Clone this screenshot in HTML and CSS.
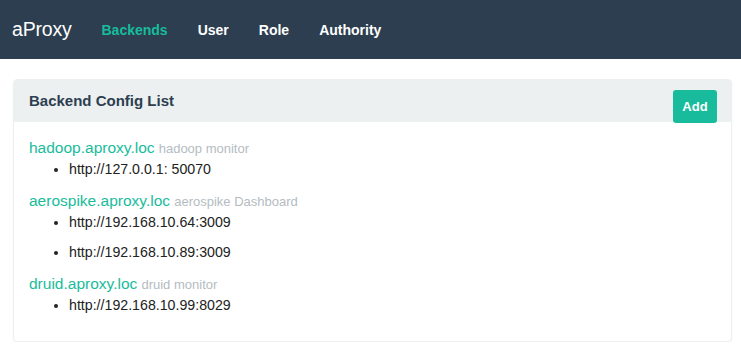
FILE: index.html
```html
<!DOCTYPE html>
<html lang="en">
<head>
    <meta charset="UTF-8">
    <meta name="viewport" content="width=device-width, initial-scale=1.0">
    <title>aProxy - Backends</title>
    <link rel="stylesheet" href="styles.css">
</head>
<body>
    <nav class="navbar">
        <a class="brand" href="#">aProxy</a>
        <a class="nav-link active" href="#">Backends</a>
        <a class="nav-link" href="#">User</a>
        <a class="nav-link" href="#">Role</a>
        <a class="nav-link" href="#">Authority</a>
    </nav>

    <div class="container">
        <div class="panel">
            <div class="panel-heading">
                <h3>Backend Config List</h3>
                <button class="btn-add">Add</button>
            </div>
            <div class="panel-body">
                <div class="backend">
                    <a href="#">hadoop.aproxy.loc</a> <small>hadoop monitor</small>
                    <ul><li>http://127.0.0.1: 50070</li></ul>
                </div>
                <div class="backend">
                    <a href="#">aerospike.aproxy.loc</a> <small>aerospike Dashboard</small>
                    <ul><li>http://192.168.10.64:3009</li></ul>
                    <ul><li>http://192.168.10.89:3009</li></ul>
                </div>
                <div class="backend">
                    <a href="#">druid.aproxy.loc</a> <small>druid monitor</small>
                    <ul><li>http://192.168.10.99:8029</li></ul>
                </div>
            </div>
        </div>
    </div>
</body>
</html>
```

FILE: styles.css
```css
body {
    margin: 0;
    font-family: 'Liberation Sans', Arial, sans-serif;
    font-size: 15px;
    color: #2c3e50;
    background: #fff;
}
.navbar {
    background: #2c3e50;
    height: 59px;
    display: flex;
    align-items: center;
    padding: 0 12px;
}
.navbar a {
    text-decoration: none;
    color: #fff;
}
.brand {
    font-size: 19.5px;
    margin-right: 30px;
    letter-spacing: -0.2px;
}
.nav-link {
    font-weight: bold;
    font-size: 14px;
    margin-right: 30px;
}
.nav-link.active {
    color: #18bc9c !important;
}
.container {
    padding: 20px 9px 0 13px;
}
.panel {
    border: 1px solid #ecf0f1;
    border-radius: 4px;
    box-shadow: 0 1px 2px rgba(0, 0, 0, 0.06);
}
.panel-heading {
    background: #ecf0f1;
    height: 42px;
    padding: 0 14px 0 15px;
    display: flex;
    justify-content: space-between;
    align-items: flex-start;
}
.panel-heading h3 {
    margin: 0;
    font-size: 15px;
    line-height: 42px;
}
.btn-add {
    margin-top: 10px;
    width: 44px;
    height: 33px;
    border: none;
    border-radius: 3px;
    background: #18bc9c;
    color: #fff;
    font-family: 'Liberation Sans', Arial, sans-serif;
    font-weight: bold;
    font-size: 13px;
    padding: 0;
    position: relative;
    z-index: 1;
}
.panel-body {
    padding: 16px 15px 14px;
    line-height: 20px;
}
.backend {
    padding-bottom: 2px;
}
.backend a {
    color: #18bc9c;
    text-decoration: none;
    font-size: 15.5px;
}
.backend small {
    color: #b4bcc2;
    font-size: 13px;
}
.backend ul {
    margin: 0 0 10px;
    padding-left: 40px;
}
.backend li {
    color: #222;
    font-size: 14.2px;
}
```
